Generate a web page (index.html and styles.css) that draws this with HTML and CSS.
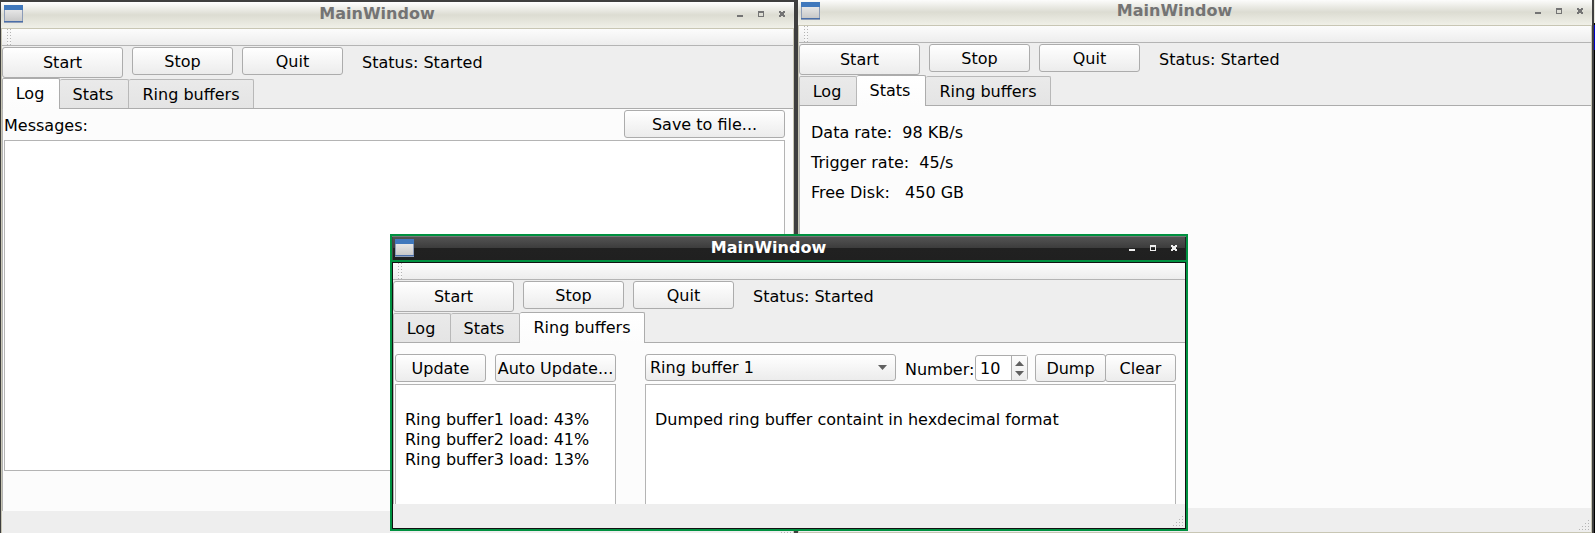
FILE: index.html
```
<!DOCTYPE html>
<html lang="en">
<head>
<meta charset="utf-8">
<title>MainWindow</title>
<link rel="stylesheet" href="styles.css">
</head>
<body>
<svg class="defs" aria-hidden="true">
  <defs>
    <linearGradient id="face" x1="0" y1="0" x2="0" y2="1"><stop offset="0" stop-color="#e6e6e6"/><stop offset="1" stop-color="#c8c8c8"/></linearGradient>
    <symbol id="app" viewBox="0 -1 20 19"><path fill="#8c9cb8" d="M0 0h19v18H0z"/><path fill="#4078bc" d="M0 0h19v5H0z"/><path fill="url(#face)" d="M1 5h17v11H1z"/><path fill="#4a6ea8" d="M0 16h19v1H0z"/></symbol>
    <symbol id="min" viewBox="0 0 7 7"><path d="M0 5h6v2H0z"/></symbol>
    <symbol id="max" viewBox="0 0 7 7"><path fill-rule="evenodd" d="M0 1h6v6H0zM1 3v3h4V3z"/></symbol>
    <symbol id="close" viewBox="0 0 7 7"><path d="M0 1h2v1h2V1h2v2H5v2h1v2H4V6H2v1H0V5h1V3H0z"/></symbol>
    <symbol id="grip" viewBox="0 0 12 12"><path fill="#b4b4b4" d="M10 1h1v1h-1zM7 4h1v1H7zM10 4h1v1h-1zM4 7h1v1H4zM7 7h1v1H7zM10 7h1v1h-1zM1 10h1v1H1zM4 10h1v1H4zM7 10h1v1H7zM10 10h1v1h-1z"/></symbol>
    <symbol id="down" viewBox="0 0 10 5" preserveAspectRatio="none"><path d="M0 0h10L5 5z"/></symbol>
    <symbol id="up" viewBox="0 0 10 5" preserveAspectRatio="none"><path d="M0 5h10L5 0z"/></symbol>
  </defs>
</svg>
<main class="desktop">

  <section class="window window-log">
    <header class="titlebar">
      <svg class="app-icon"><use href="#app"/></svg>
      <h2 class="title">MainWindow</h2>
      <button class="winbtn" aria-label="Minimize"><svg><use href="#min"/></svg></button>
      <button class="winbtn" aria-label="Maximize"><svg><use href="#max"/></svg></button>
      <button class="winbtn" aria-label="Close"><svg><use href="#close"/></svg></button>
    </header>
    <div class="client">
      <div class="toolbar"></div>
      <div class="controls">
        <button class="btn start">Start</button>
        <button class="btn wide">Stop</button>
        <button class="btn wide">Quit</button>
        <span class="status">Status: Started</span>
      </div>
      <div class="tabs" role="tablist">
        <button class="tab tab-log selected" role="tab" aria-selected="true">Log</button>
        <button class="tab tab-stats" role="tab">Stats</button>
        <button class="tab tab-rings" role="tab">Ring buffers</button>
      </div>
      <div class="pane log-pane">
        <div class="log-head">
          <label class="messages-label" for="messages">Messages:</label>
          <button class="btn save">Save to file...</button>
        </div>
        <textarea class="box messages" id="messages"></textarea>
      </div>
      <footer class="statusbar"><svg class="grip"><use href="#grip"/></svg></footer>
    </div>
  </section>

  <section class="window window-stats">
    <header class="titlebar">
      <svg class="app-icon"><use href="#app"/></svg>
      <h2 class="title">MainWindow</h2>
      <button class="winbtn" aria-label="Minimize"><svg><use href="#min"/></svg></button>
      <button class="winbtn" aria-label="Maximize"><svg><use href="#max"/></svg></button>
      <button class="winbtn" aria-label="Close"><svg><use href="#close"/></svg></button>
    </header>
    <div class="client">
      <div class="toolbar"></div>
      <div class="controls">
        <button class="btn start">Start</button>
        <button class="btn wide">Stop</button>
        <button class="btn wide">Quit</button>
        <span class="status">Status: Started</span>
      </div>
      <div class="tabs" role="tablist">
        <button class="tab tab-log" role="tab">Log</button>
        <button class="tab tab-stats selected" role="tab" aria-selected="true">Stats</button>
        <button class="tab tab-rings" role="tab">Ring buffers</button>
      </div>
      <div class="pane stats-pane">
        <p class="stat">Data rate:  98 KB/s</p>
        <p class="stat">Trigger rate:  45/s</p>
        <p class="stat">Free Disk:   450 GB</p>
      </div>
      <footer class="statusbar"><svg class="grip"><use href="#grip"/></svg></footer>
    </div>
  </section>

  <section class="window window-rings active">
    <header class="titlebar">
      <svg class="app-icon"><use href="#app"/></svg>
      <h2 class="title">MainWindow</h2>
      <button class="winbtn" aria-label="Minimize"><svg><use href="#min"/></svg></button>
      <button class="winbtn" aria-label="Maximize"><svg><use href="#max"/></svg></button>
      <button class="winbtn" aria-label="Close"><svg><use href="#close"/></svg></button>
    </header>
    <div class="client">
      <div class="toolbar"></div>
      <div class="controls">
        <button class="btn start">Start</button>
        <button class="btn wide">Stop</button>
        <button class="btn wide">Quit</button>
        <span class="status">Status: Started</span>
      </div>
      <div class="tabs" role="tablist">
        <button class="tab tab-log" role="tab">Log</button>
        <button class="tab tab-stats" role="tab">Stats</button>
        <button class="tab tab-rings selected" role="tab" aria-selected="true">Ring buffers</button>
      </div>
      <div class="pane rings-pane">
        <div class="loads">
          <div class="row loads-row">
            <button class="btn update">Update</button>
            <button class="btn auto">Auto Update...</button>
          </div>
          <div class="box output">
            <p>Ring buffer1 load: 43%</p>
            <p>Ring buffer2 load: 41%</p>
            <p>Ring buffer3 load: 13%</p>
          </div>
        </div>
        <div class="dump">
          <div class="row">
            <div class="combo">
              <select class="combo-select" aria-label="Ring buffer"><option>Ring buffer 1</option></select>
              <svg class="combo-arrow"><use href="#down"/></svg>
            </div>
            <label class="number-label" for="number">Number:</label>
            <div class="spin">
              <input class="spin-input" id="number" type="number" value="10">
              <div class="spin-buttons">
                <button class="spin-btn" aria-label="Increase"><svg><use href="#up"/></svg></button>
                <button class="spin-btn" aria-label="Decrease"><svg><use href="#down"/></svg></button>
              </div>
            </div>
            <div class="pair">
              <button class="btn small">Dump</button>
              <button class="btn small">Clear</button>
            </div>
          </div>
          <div class="box output">
            <p>Dumped ring buffer containt in hexdecimal format</p>
          </div>
        </div>
      </div>
      <footer class="statusbar"><svg class="grip"><use href="#grip"/></svg></footer>
    </div>
  </section>

</main>
</body>
</html>
```
FILE: styles.css
```
* { box-sizing: border-box; }

body {
  margin: 0;
  font: 16px/20px "DejaVu Sans", sans-serif;
  color: #000;
}

p, h2 { margin: 0; }

button, input, select, textarea {
  font: inherit;
  color: inherit;
  margin: 0;
  padding: 0;
  border: 0;
  background: none;
}

.defs { position: absolute; width: 0; height: 0; }

.desktop {
  position: relative;
  height: 100vh;
  overflow: hidden;
  background: linear-gradient(#e4e4dc 0 23px, #000 23px 25px, #0000c8 25px 50px, #000 50px);
}

/* Windows */
.window {
  position: absolute;
  display: flex;
  flex-direction: column;
  border: 2px solid #3f3f3f;
  background: #eee;
}
.window-log { left: -1px; right: 799px; top: 0; bottom: -5px; }
.window-stats { left: 796px; right: 1px; top: -3px; bottom: -2px; }
.window-rings { left: 390px; right: 407px; top: 234px; bottom: 2px; }
.window.active { border-color: #009140; }

.titlebar {
  display: flex;
  align-items: center;
  height: 26px;
  padding: 0 1px 3px 3px;
  color: #747474;
  background: linear-gradient(#fff, #dcdcd2 50%, #e0e0d6 60%, #f0f0e8);
}
.active .titlebar {
  color: #fff;
  border-bottom: 2px solid #009140;
  padding-bottom: 1px;
  box-shadow: inset 0 1px #777, inset 1px 0 #444, inset -1px 0 #222;
  background: linear-gradient(#555, #3d3d3d 48%, #212121 52%, #202020);
}
.app-icon { width: 20px; height: 19px; }
.title {
  flex: 1;
  text-align: center;
  font-size: 16px;
  line-height: 21px;
}
.winbtn {
  display: flex;
  align-items: center;
  justify-content: center;
  width: 21px;
  height: 19px;
}
.winbtn svg { width: 7px; height: 7px; fill: #747474; }
.active .winbtn svg { fill: #eee; }

.client {
  flex: 1;
  display: flex;
  flex-direction: column;
  min-height: 0;
  border: 1px solid #c8c6b4;
}
.active .client { border-color: #111; }

.toolbar {
  height: 17px;
  border-bottom: 1px solid #b4b4b4;
  background:
    repeating-linear-gradient(transparent 0 1px, #f7f7f7 1px 3px) 5px 0 / 4px 100% no-repeat,
    linear-gradient(90deg, #b4b4b4 1px, transparent 1px 3px, #b4b4b4 3px) 5px 0 / 4px 100% no-repeat,
    linear-gradient(#fcfcfc, #ededed);
}

.controls {
  display: flex;
  align-items: flex-start;
  gap: 9px;
  padding: 1px 0;
  height: 32px;
}
.btn {
  height: 28px;
  border: 1px solid #acacac;
  border-radius: 3px;
  background: linear-gradient(#fff, #ececec);
  white-space: nowrap;
}
.start { width: 121px; height: 31px; }
.wide, .save, .update, .auto, .small { padding-top: 1px; }
.wide { width: 101px; }
.status { padding: 6px 0 0 10px; }

/* Tabs */
.tabs {
  display: flex;
  align-items: flex-end;
  height: 31px;
  border-bottom: 1px solid #acacac;
}
.tab {
  height: 29px;
  padding-top: 2px;
  border: 1px solid #b8b8b8;
  border-width: 1px 1px 0 0;
  border-radius: 2px 2px 0 0;
  background: linear-gradient(#eaeaea, #e4e4e4);
}
.tab-log { width: 58px; padding-right: 2px; border-left-width: 1px; }
.tab-stats { width: 69px; padding-right: 2px; }
.tab-rings { width: 125px; }
.tab.selected {
  height: 31px;
  margin-bottom: -1px;
  padding-top: 0;
  padding-bottom: 1px;
  border-color: #acacac;
  background: linear-gradient(#fff, #fcfcfc);
}

.pane {
  flex: 1;
  display: flex;
  min-height: 0;
  border-left: 1px solid #b4b4b4;
  background: #fcfcfc;
}
.box {
  border: 1px solid #b4b4b4;
  background: #fff;
}

.log-pane { flex-direction: column; gap: 2px; padding: 1px 8px 40px 1px; }
.log-head { display: flex; justify-content: space-between; align-items: center; }
.messages-label { padding-top: 3px; }
.save { width: 161px; }
.messages { flex: 1; width: 100%; resize: none; display: block; }

.stats-pane { flex-direction: column; padding: 12px 11px; }
.stat { line-height: 30px; white-space: pre; }

.rings-pane { gap: 29px; padding: 11px 9px 0 1px; }
.loads, .dump { display: flex; flex-direction: column; gap: 2px; }
.loads { width: 221px; }
.dump { flex: 1; }
.row { display: flex; align-items: flex-start; height: 28px; }
.loads-row { justify-content: space-between; }
.update { width: 91px; }
.auto { width: 121px; }
.output { flex: 1; border-bottom: 0; padding: 25px 9px 0; }

.combo { position: relative; flex: 1; }
.combo-select {
  appearance: none;
  display: block;
  width: 100%;
  height: 27px;
  padding: 0 4px;
  border: 1px solid #acacac;
  border-radius: 3px;
  background: linear-gradient(#fff, #ececec);
}
.combo-arrow {
  position: absolute;
  right: 9px;
  top: 11px;
  width: 9px;
  height: 5px;
  fill: #606060;
  pointer-events: none;
}
.number-label { width: 70px; margin-left: 9px; padding-top: 6px; }
.spin {
  display: flex;
  width: 53px;
  height: 26px;
  margin: 1px 7px 0 0;
  border: 1px solid #acacac;
  border-radius: 3px;
  background: #fff;
}
.spin-input {
  appearance: textfield;
  flex: 1;
  min-width: 0;
  padding: 1px 0 0 4px;
}
.spin-input::-webkit-inner-spin-button { appearance: none; margin: 0; }
.spin-buttons {
  display: flex;
  flex-direction: column;
  justify-content: center;
  width: 16px;
  border-left: 1px solid #acacac;
  background: linear-gradient(#fdfdfd, #ececec);
}
.spin-btn { height: 10px; display: flex; align-items: center; justify-content: center; }
.spin-btn svg { width: 9px; height: 5px; fill: #606060; }
.pair { display: flex; }
.small { width: 71px; }
.small + .small { margin-left: -1px; }

.statusbar {
  display: flex;
  justify-content: flex-end;
  align-items: flex-end;
  height: 24px;
  padding: 0 1px 1px 0;
  background: #eee;
}
.grip { width: 12px; height: 12px; }
```
